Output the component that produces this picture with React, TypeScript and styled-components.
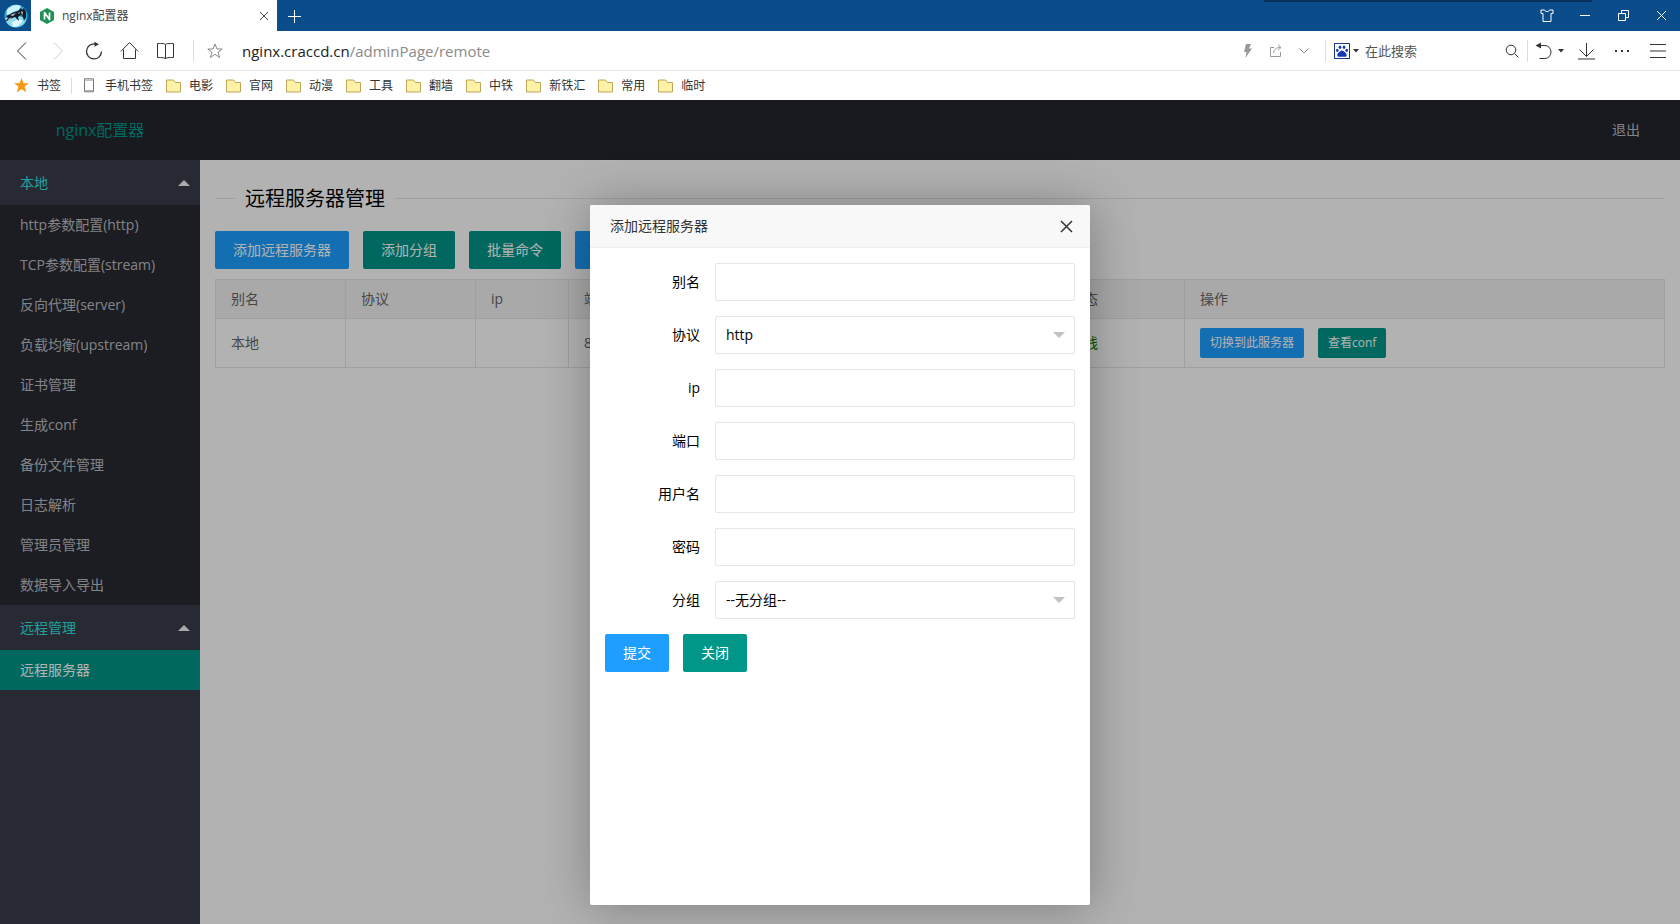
import React from "react";
import styled, { createGlobalStyle } from "styled-components";

const GlobalStyle = createGlobalStyle`
  * { box-sizing: border-box; }
  body {
    margin: 0;
    background: #fff;
    color: #000;
    font: 14px/24px "Open Sans", "Noto Sans CJK SC", sans-serif;
  }
  button, input, select { font: inherit; color: inherit; margin: 0; }
  button { cursor: pointer; }
  a { color: inherit; text-decoration: none; }
  ul { list-style: none; margin: 0; padding: 0; }
`;

const Page = styled.div`
  display: flex;
  flex-direction: column;
  min-height: 100vh;
`;

/* ---------- browser frame ---------- */

const TabStrip = styled.div`
  position: relative;
  display: flex;
  align-items: center;
  height: 31px;
  background: #0b4c8a;
  color: #fff;
`;

const TopShade = styled.div`
  position: absolute;
  top: 0;
  right: 88px;
  width: 328px;
  height: 2px;
  background: #0a2f5c;
`;

const Avatar = styled.div`
  display: flex;
  justify-content: center;
  width: 31px;
`;

const Tab = styled.div`
  display: flex;
  align-items: center;
  gap: 7px;
  width: 246px;
  height: 31px;
  padding: 0 2px 0 8px;
  background: #fff;
  color: #444;
  font-size: 12px;
`;

const TabTitle = styled.span`
  flex: 1;
`;

const IconButton = styled.button<{ $w: number; $color?: string }>`
  display: flex;
  align-items: center;
  justify-content: center;
  width: ${(p) => p.$w}px;
  height: 30px;
  padding: 0;
  border: 0;
  background: none;
  color: ${(p) => p.$color ?? "inherit"};
`;

const Spacer = styled.div`
  flex: 1;
`;

const AddressBar = styled.div`
  display: flex;
  align-items: center;
  height: 40px;
  padding: 0 4px;
  border-bottom: 1px solid #e4e4e4;
  color: #333;
`;

const Divider = styled.span<{ $h: number; $m: string }>`
  width: 1px;
  height: ${(p) => p.$h}px;
  margin: ${(p) => p.$m};
  background: #ddd;
`;

const Url = styled.a`
  margin-left: 13px;
  color: #8a8a8a;
  font-size: 15px;
  b { color: #222; font-weight: 400; }
`;

const SearchBox = styled.input`
  width: 132px;
  height: 28px;
  padding: 0;
  border: 0;
  outline: 0;
  font-size: 13px;
  &::placeholder { color: #555; opacity: 1; }
`;

const Bookmarks = styled.nav`
  display: flex;
  align-items: center;
  gap: 13px;
  height: 29px;
  padding: 0 14px;
  color: #333;
  font-size: 12px;
`;

const Bookmark = styled.a`
  display: flex;
  align-items: center;
  gap: 8px;
`;

/* ---------- application ---------- */

const AppArea = styled.div`
  position: relative;
  display: flex;
  flex: 1;
  flex-direction: column;
`;

const Header = styled.header`
  display: flex;
  align-items: center;
  justify-content: space-between;
  height: 60px;
  padding-right: 40px;
  background: #23262e;
  color: rgba(255, 255, 255, 0.7);
`;

const Logo = styled.div`
  width: 200px;
  color: #009688;
  font-size: 16px;
  text-align: center;
`;

const Columns = styled.div`
  display: flex;
  flex: 1;
`;

const Sidebar = styled.nav`
  width: 200px;
  background: #393d49;
  color: rgba(255, 255, 255, 0.7);
`;

const GroupTitle = styled.button`
  display: flex;
  align-items: center;
  justify-content: space-between;
  width: 100%;
  height: 45px;
  padding: 0 10px 0 20px;
  border: 0;
  background: none;
  color: #30e4de;
`;

const ArrowUp = styled.span`
  border: 6px solid transparent;
  border-top: 0;
  border-bottom-color: #f2f2f2;
`;

const SubMenu = styled.ul`
  background: rgba(0, 0, 0, 0.3);
`;

const MenuLink = styled.a<{ $active?: boolean }>`
  display: block;
  padding: 0 20px;
  line-height: 40px;
  background: ${(p) => (p.$active ? "#009688" : "transparent")};
  color: ${(p) => (p.$active ? "#fff" : "inherit")};
`;

const Main = styled.main`
  flex: 1;
  min-width: 0;
  padding: 22px 15px;
`;

const TitleLine = styled.fieldset`
  margin: 0;
  padding: 0 0 17px;
  border: 0;
  border-top: 1px solid #e6e6e6;
`;

const Title = styled.legend`
  margin-left: 20px;
  padding: 2px 10px 0;
  font-size: 20px;
  line-height: 30px;
`;

const ButtonRow = styled.div`
  display: flex;
  gap: 14px;
`;

const Button = styled.button<{ $blue?: boolean; $small?: boolean }>`
  height: ${(p) => (p.$small ? 30 : 38)}px;
  padding: 0 ${(p) => (p.$small ? 10 : 18)}px;
  border: 0;
  border-radius: 2px;
  background: ${(p) => (p.$blue ? "#1e9fff" : "#009688")};
  color: #fff;
  font-size: ${(p) => (p.$small ? 12 : 14)}px;
  line-height: ${(p) => (p.$small ? 30 : 38)}px;
  white-space: nowrap;
`;

const Table = styled.table`
  width: 100%;
  margin-top: 10px;
  border-collapse: collapse;
  table-layout: fixed;
  color: #666;
  line-height: 20px;
  text-align: left;
  th, td {
    padding: 9px 15px;
    border: 1px solid #e6e6e6;
    font-weight: 400;
  }
  th { background: #f2f2f2; }
`;

const Col = styled.col<{ $w?: number }>`
  width: ${(p) => (p.$w ? `${p.$w}px` : "auto")};
`;

const Online = styled.span`
  color: green;
`;

/* ---------- dialog ---------- */

const Shade = styled.div`
  position: absolute;
  inset: 0;
  display: flex;
  align-items: flex-start;
  justify-content: center;
  padding: 105px 0 19px;
  background: rgba(0, 0, 0, 0.3);
`;

const Dialog = styled.section`
  width: 500px;
  min-height: 700px;
  border-radius: 2px;
  background: #fff;
  box-shadow: 1px 1px 50px rgba(0, 0, 0, 0.3);
`;

const DialogHead = styled.div`
  display: flex;
  align-items: center;
  justify-content: space-between;
  height: 43px;
  padding: 0 8px 0 20px;
  border-bottom: 1px solid #eee;
  border-radius: 2px 2px 0 0;
  background: #f8f8f8;
  color: #333;
`;

const Form = styled.form`
  display: flex;
  flex-direction: column;
  gap: 15px;
  padding: 15px;
`;

const Field = styled.div`
  display: flex;
`;

const Label = styled.label`
  width: 110px;
  padding: 9px 15px;
  line-height: 20px;
  text-align: right;
`;

const Input = styled.input`
  flex: 1;
  height: 38px;
  padding: 0 10px;
  border: 1px solid #e6e6e6;
  border-radius: 2px;
  background: #fff;
`;

const SelectWrap = styled.div`
  position: relative;
  display: flex;
  flex: 1;
  &::after {
    content: "";
    position: absolute;
    top: 16px;
    right: 10px;
    border: 6px solid transparent;
    border-top-color: #c2c2c2;
    border-bottom: 0;
    pointer-events: none;
  }
`;

const Select = styled.select`
  flex: 1;
  height: 38px;
  padding: 0 10px;
  border: 1px solid #e6e6e6;
  border-radius: 2px;
  background: #fff;
  appearance: none;
`;

/* ---------- icons ---------- */

type IconProps = { w?: number; h?: number; sw?: number; children: React.ReactNode };

const Icon = ({ w = 20, h = 20, sw = 1, children }: IconProps) => (
  <svg width={w} height={h} viewBox={`0 0 ${w} ${h}`} fill="none" stroke="currentColor" strokeWidth={sw} aria-hidden="true">
    {children}
  </svg>
);

const Cross = ({ size, sw = 1 }: { size: number; sw?: number }) => (
  <Icon w={size} h={size} sw={sw}>
    <path d={`M1 1L${size - 1} ${size - 1}M${size - 1} 1L1 ${size - 1}`} />
  </Icon>
);

const AvatarPicture = () => (
  <svg width="24" height="24" viewBox="0 0 24 24" aria-hidden="true">
    <circle cx="12" cy="12" r="11.5" fill="#2fa6d4" />
    <path d="M2.5 7A11 11 0 0 1 17 2l-2 4-6 2-6 5z" fill="#c9f2fb" />
    <path d="M1 14l8-1 6-1 5 2 2 2A11 11 0 0 1 3 19z" fill="#8fdcf0" />
    <path d="M8 18l7-3 4 2-5 5-5 1z" fill="#e4fafe" />
    <path d="M2 12l6-3 6-2 3-3 1 2 2-2 2 4 0 5-2 4-1-4-2-2-3 2 1 4-2-2-2-2-5 2-5 3 3-4z" fill="#141c28" />
    <path d="M17 7l2 1-1 4zM6 11l6-2-3 3zM4 15l4-2-3 3zM14 9l2-1-1 2z" fill="#b9c8d2" />
  </svg>
);

const NginxMark = () => (
  <svg width="16" height="16" viewBox="0 0 16 16" aria-hidden="true">
    <path d="M8 0l7 4v8l-7 4-7-4V4z" fill="#1f8f55" />
    <path d="M5.5 11.5v-7l5 7v-7" fill="none" stroke="#fff" strokeWidth="1.7" strokeLinejoin="round" />
  </svg>
);

const Folder = () => (
  <svg width="15" height="14" viewBox="0 0 15 14" aria-hidden="true">
    <path d="M.5 13V1h7l2 2.5h5V13z" fill="#fdf1a6" stroke="#bda65a" />
  </svg>
);

const BaiduMark = () => (
  <svg width="16" height="16" viewBox="0 0 16 16" aria-hidden="true">
    <rect x=".5" y=".5" width="15" height="15" fill="#fff" stroke="#173a8c" />
    <g fill="#1538b0">
      <ellipse cx="3.3" cy="7.3" rx="1.3" ry="1.6" />
      <ellipse cx="6" cy="4.2" rx="1.3" ry="1.8" />
      <ellipse cx="10" cy="4.2" rx="1.3" ry="1.8" />
      <ellipse cx="12.7" cy="7.3" rx="1.3" ry="1.6" />
      <path d="M8 7.5c1.5 0 2 1 3.2 2.1 1.3 1.1 1.8 2 1.3 3.4-.6 1.2-2.6.7-4.5.7s-3.9.5-4.5-.7c-.5-1.4 0-2.3 1.3-3.4C6 8.5 6.5 7.5 8 7.5z" />
    </g>
  </svg>
);

const folders = ["电影", "官网", "动漫", "工具", "翻墙", "中铁", "新铁汇", "常用", "临时"];

const localMenu = [
  "http参数配置(http)",
  "TCP参数配置(stream)",
  "反向代理(server)",
  "负载均衡(upstream)",
  "证书管理",
  "生成conf",
  "备份文件管理",
  "日志解析",
  "管理员管理",
  "数据导入导出",
];

const BrowserFrame = () => (
  <>
    <TabStrip>
      <TopShade />
      <Avatar>
        <AvatarPicture />
      </Avatar>
      <Tab>
        <NginxMark />
        <TabTitle>nginx配置器</TabTitle>
        <IconButton $w={22} aria-label="关闭标签页">
          <Cross size={10} />
        </IconButton>
      </Tab>
      <IconButton $w={34} aria-label="新标签页">
        <Icon w={14} h={14}>
          <path d="M7.5 1v13M1 7.5h13" />
        </Icon>
      </IconButton>
      <Spacer />
      <IconButton $w={38} aria-label="皮肤">
        <Icon w={14} h={13}>
          <path d="M1 1h3.5c.5 2 4.5 2 5 0H13v3.5h-2v8H3v-8H1z" />
        </Icon>
      </IconButton>
      <IconButton $w={38} aria-label="最小化">
        <Icon w={10} h={11}>
          <path d="M0 5.5h10" />
        </Icon>
      </IconButton>
      <IconButton $w={38} aria-label="还原">
        <Icon w={11} h={11}>
          <path d="M.5 3.5h7v7h-7zM3.5 3.5v-3h7v7h-3" />
        </Icon>
      </IconButton>
      <IconButton $w={38} aria-label="关闭">
        <Cross size={11} />
      </IconButton>
    </TabStrip>

    <AddressBar>
      <IconButton $w={36} aria-label="后退">
        <Icon>
          <path d="M14 1.5L5.5 10l8.5 8.5" />
        </Icon>
      </IconButton>
      <IconButton $w={36} $color="#ccc" aria-label="前进">
        <Icon>
          <path d="M6 1.5l8.5 8.5L6 18.5" />
        </Icon>
      </IconButton>
      <IconButton $w={36} aria-label="刷新">
        <Icon sw={1.3}>
          <path d="M17.5 10.5A7.5 7.5 0 1 1 11 3" />
          <path d="M10.5.8l4.5 2.4-4.5 2.6z" fill="currentColor" stroke="none" />
        </Icon>
      </IconButton>
      <IconButton $w={36} aria-label="主页">
        <Icon>
          <path d="M.8 10.5L9.5 1.5l8.7 9M3.5 8.5v9h12v-9" />
        </Icon>
      </IconButton>
      <IconButton $w={36} aria-label="阅读">
        <Icon>
          <path d="M9.5 3.5c-1-1-3-1-8-1v14c5 0 7 0 8 1.5 1-1.5 3-1.5 8-1.5v-14c-5 0-7 0-8 1zV18" />
        </Icon>
      </IconButton>
      <Divider $h={22} $m="0 7px 0 9px" />
      <IconButton $w={28} $color="#888" aria-label="收藏">
        <Icon w={16} h={16}>
          <path d="M8 1l2 5h5.2l-4.2 3.2 1.6 5.3L8 11.3l-4.6 3.2L5 9.2.8 6H6z" />
        </Icon>
      </IconButton>
      <Url href="#">
        <b>nginx.craccd.cn</b>/adminPage/remote
      </Url>
      <Spacer />
      <IconButton $w={28} $color="#999" aria-label="极速模式">
        <Icon w={10} h={14}>
          <path d="M3 0h5L6 4.5h3L2.5 14l1-6H1z" fill="currentColor" stroke="none" />
        </Icon>
      </IconButton>
      <IconButton $w={28} $color="#999" aria-label="分享">
        <Icon w={14} h={14}>
          <path d="M5 3.5H1.5v9h10V8M4.5 9c.5-4 3-5.5 7-5.5M9 .8l3 2.7-3 2.8" />
        </Icon>
      </IconButton>
      <IconButton $w={28} $color="#888" aria-label="更多">
        <Icon w={10} h={8}>
          <path d="M.5 1.5L5 6l4.5-4.5" />
        </Icon>
      </IconButton>
      <Divider $h={22} $m="0 5px 0 7px" />
      <IconButton $w={34} aria-label="搜索引擎">
        <BaiduMark />
        <Icon w={12} h={6}>
          <path d="M3 1h6L6 4.5z" fill="currentColor" stroke="none" />
        </Icon>
      </IconButton>
      <SearchBox type="text" placeholder="在此搜索" aria-label="在此搜索" />
      <IconButton $w={30} aria-label="搜索">
        <Icon w={14} h={14}>
          <circle cx="6" cy="6" r="4.8" />
          <path d="M9.5 9.5l4 4" />
        </Icon>
      </IconButton>
      <Divider $h={22} $m="0 4px 0 0" />
      <IconButton $w={36} aria-label="撤销">
        <Icon w={32} h={20}>
          <path d="M4 4.5h7a6 6.5 0 0 1 0 13H5.5" />
          <path d="M1.5 4.5L7 1.5v6zM24 8h6l-3 3.5z" fill="currentColor" stroke="none" />
        </Icon>
      </IconButton>
      <IconButton $w={36} aria-label="下载">
        <Icon>
          <path d="M10.5 2v13M3.5 8.5l7 7 7-7M2 18h17" />
        </Icon>
      </IconButton>
      <IconButton $w={36} aria-label="更多工具">
        <Icon w={16} h={4}>
          <path d="M1 1h2v2H1zM7 1h2v2H7zM13 1h2v2h-2z" fill="currentColor" stroke="none" />
        </Icon>
      </IconButton>
      <IconButton $w={36} aria-label="菜单">
        <Icon w={16} h={14}>
          <path d="M0 .5h16M0 7h16M0 13.5h16" />
        </Icon>
      </IconButton>
    </AddressBar>

    <Bookmarks>
      <Bookmark href="#">
        <svg width="15" height="15" viewBox="0 0 15 15" aria-hidden="true">
          <path d="M7.5 0l2 5.2h5.5l-4.4 3.4 1.7 5.9-4.8-3.5-4.8 3.5 1.7-5.9L0 5.2h5.5z" fill="#f59a17" />
        </svg>
        书签
      </Bookmark>
      <Divider $h={16} $m="0 -3px" />
      <Bookmark href="#">
        <Icon w={15} h={15}>
          <path d="M2.5 .8h9v13h-9z" stroke="#777" />
          <path d="M2.5 2.2h9M2.5 12.5h9" stroke="#aaa" />
        </Icon>
        手机书签
      </Bookmark>
      {folders.map((name) => (
        <Bookmark href="#" key={name}>
          <Folder />
          {name}
        </Bookmark>
      ))}
    </Bookmarks>
  </>
);

const ServerDialog = () => (
  <Shade>
    <Dialog role="dialog" aria-labelledby="dialog-title">
      <DialogHead>
        <span id="dialog-title">添加远程服务器</span>
        <IconButton $w={32} aria-label="关闭">
          <Cross size={13} sw={1.5} />
        </IconButton>
      </DialogHead>
      <Form>
        <Field>
          <Label htmlFor="alias">别名</Label>
          <Input id="alias" type="text" />
        </Field>
        <Field>
          <Label htmlFor="protocol">协议</Label>
          <SelectWrap>
            <Select id="protocol" defaultValue="http">
              <option>http</option>
              <option>https</option>
            </Select>
          </SelectWrap>
        </Field>
        <Field>
          <Label htmlFor="ip">ip</Label>
          <Input id="ip" type="text" />
        </Field>
        <Field>
          <Label htmlFor="port">端口</Label>
          <Input id="port" type="text" />
        </Field>
        <Field>
          <Label htmlFor="user">用户名</Label>
          <Input id="user" type="text" />
        </Field>
        <Field>
          <Label htmlFor="password">密码</Label>
          <Input id="password" type="password" />
        </Field>
        <Field>
          <Label htmlFor="group">分组</Label>
          <SelectWrap>
            <Select id="group">
              <option>--无分组--</option>
            </Select>
          </SelectWrap>
        </Field>
        <ButtonRow>
          <Button type="button" $blue>
            提交
          </Button>
          <Button type="button">关闭</Button>
        </ButtonRow>
      </Form>
    </Dialog>
  </Shade>
);

export default function App() {
  return (
    <Page>
      <GlobalStyle />
      <BrowserFrame />
      <AppArea>
        <Header>
          <Logo>nginx配置器</Logo>
          <a href="#">退出</a>
        </Header>
        <Columns>
          <Sidebar>
            <GroupTitle>
              本地
              <ArrowUp />
            </GroupTitle>
            <SubMenu>
              {localMenu.map((name) => (
                <li key={name}>
                  <MenuLink href="#">{name}</MenuLink>
                </li>
              ))}
            </SubMenu>
            <GroupTitle>
              远程管理
              <ArrowUp />
            </GroupTitle>
            <SubMenu>
              <li>
                <MenuLink href="#" $active>
                  远程服务器
                </MenuLink>
              </li>
            </SubMenu>
          </Sidebar>
          <Main>
            <TitleLine>
              <Title>远程服务器管理</Title>
            </TitleLine>
            <ButtonRow>
              <Button $blue>添加远程服务器</Button>
              <Button>添加分组</Button>
              <Button>批量命令</Button>
              <Button $blue>同步</Button>
            </ButtonRow>
            <Table>
              <colgroup>
                <Col $w={130} />
                <Col $w={130} />
                <Col $w={93} />
                <Col $w={190} />
                <Col />
                <Col $w={130} />
                <Col $w={480} />
              </colgroup>
              <thead>
                <tr>
                  <th>别名</th>
                  <th>协议</th>
                  <th>ip</th>
                  <th>端口</th>
                  <th>分组</th>
                  <th>状态</th>
                  <th>操作</th>
                </tr>
              </thead>
              <tbody>
                <tr>
                  <td>本地</td>
                  <td />
                  <td />
                  <td>8080</td>
                  <td />
                  <td>
                    <Online>在线</Online>
                  </td>
                  <td>
                    <ButtonRow>
                      <Button $blue $small>
                        切换到此服务器
                      </Button>
                      <Button $small>查看conf</Button>
                    </ButtonRow>
                  </td>
                </tr>
              </tbody>
            </Table>
          </Main>
        </Columns>
        <ServerDialog />
      </AppArea>
    </Page>
  );
}
